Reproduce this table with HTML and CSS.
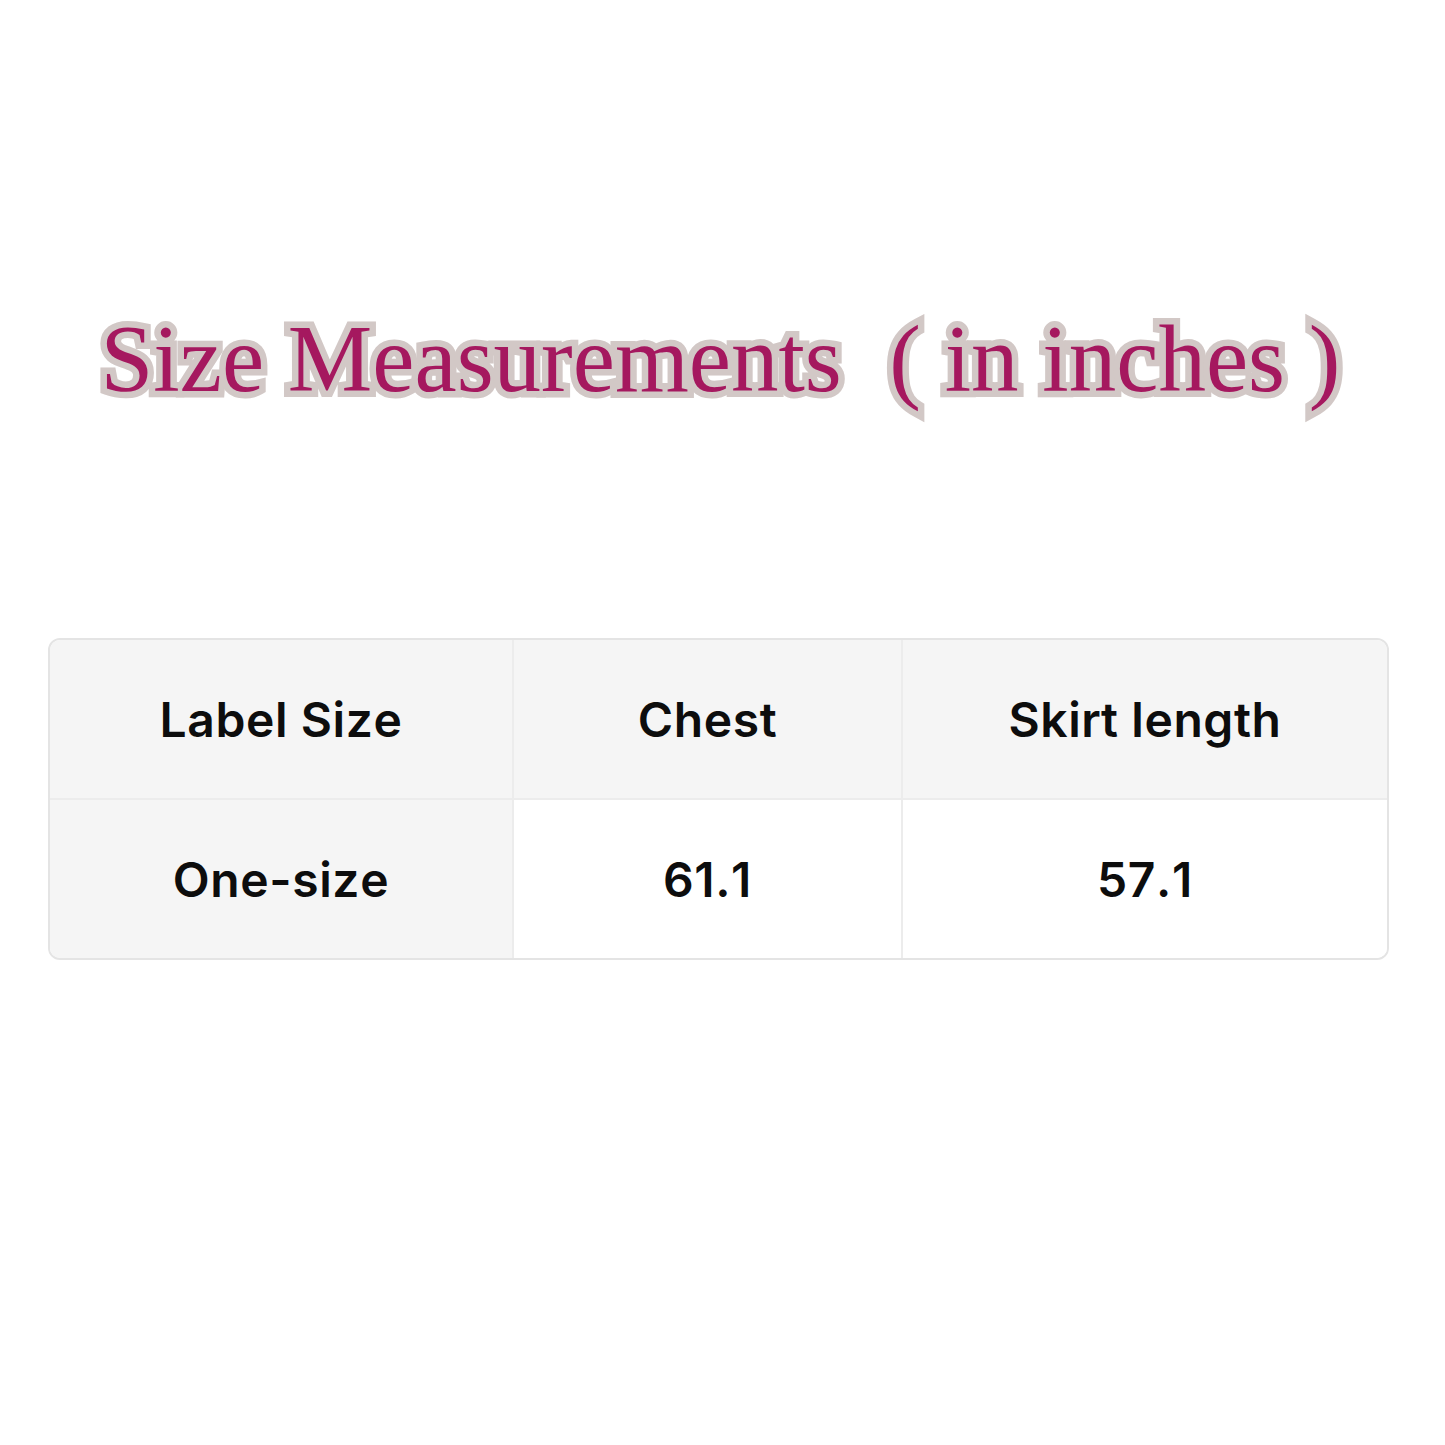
FILE: index.html
```html
<!DOCTYPE html>
<html>
<head>
<meta charset="utf-8">
<link rel="stylesheet" href="styles.css">
</head>
<body>
<div class="page">
  <h1 class="title">Size Measurements&nbsp; ( in inches )</h1>
  <div class="table-wrap">
    <table class="size-table">
      <tr class="head">
        <td class="c1">Label Size</td>
        <td class="c2">Chest</td>
        <td class="c3">Skirt length</td>
      </tr>
      <tr class="body">
        <td class="c1 label">One-size</td>
        <td class="c2">61.1</td>
        <td class="c3">57.1</td>
      </tr>
    </table>
  </div>
</div>
</body>
</html>
```
FILE: styles.css
```css
html, body {
  margin: 0;
  padding: 0;
  background: #ffffff;
}
.page {
  width: 1445px;
  height: 1445px;
  padding-top: 312px;
  box-sizing: border-box;
}
.title {
  margin: 0;
  padding-right: 4px;
  text-align: center;
  font-family: "Liberation Serif", "Times New Roman", serif;
  font-weight: 400;
  font-size: 95px;
  line-height: 95px;
  color: #a5185f;
  -webkit-text-stroke: 13px #d2c8c6;
  paint-order: stroke fill;
  white-space: pre;
}
.table-wrap {
  margin: 231px 56px 0 48px;
  border: 2px solid #e4e4e4;
  border-radius: 12px;
  overflow: hidden;
}
.size-table {
  width: 100%;
  border-collapse: collapse;
  font-family: Inter, "Liberation Sans", sans-serif;
  font-weight: 600;
  font-size: 48px;
  letter-spacing: 0.6px;
  font-kerning: none;
  color: #0d0d0d;
}
.size-table td {
  text-align: center;
  vertical-align: middle;
  height: 158px;
  padding: 0;
  border-right: 2px solid #ececec;
}
.size-table td.c3 {
  border-right: none;
}
.head td {
  background: #f5f5f5;
  border-bottom: 2px solid #ececec;
}
.body td {
  background: #ffffff;
}
.body td.label {
  background: #f5f5f5;
}
.c1 { width: 462px; }
.c2 { width: 387px; }
```
